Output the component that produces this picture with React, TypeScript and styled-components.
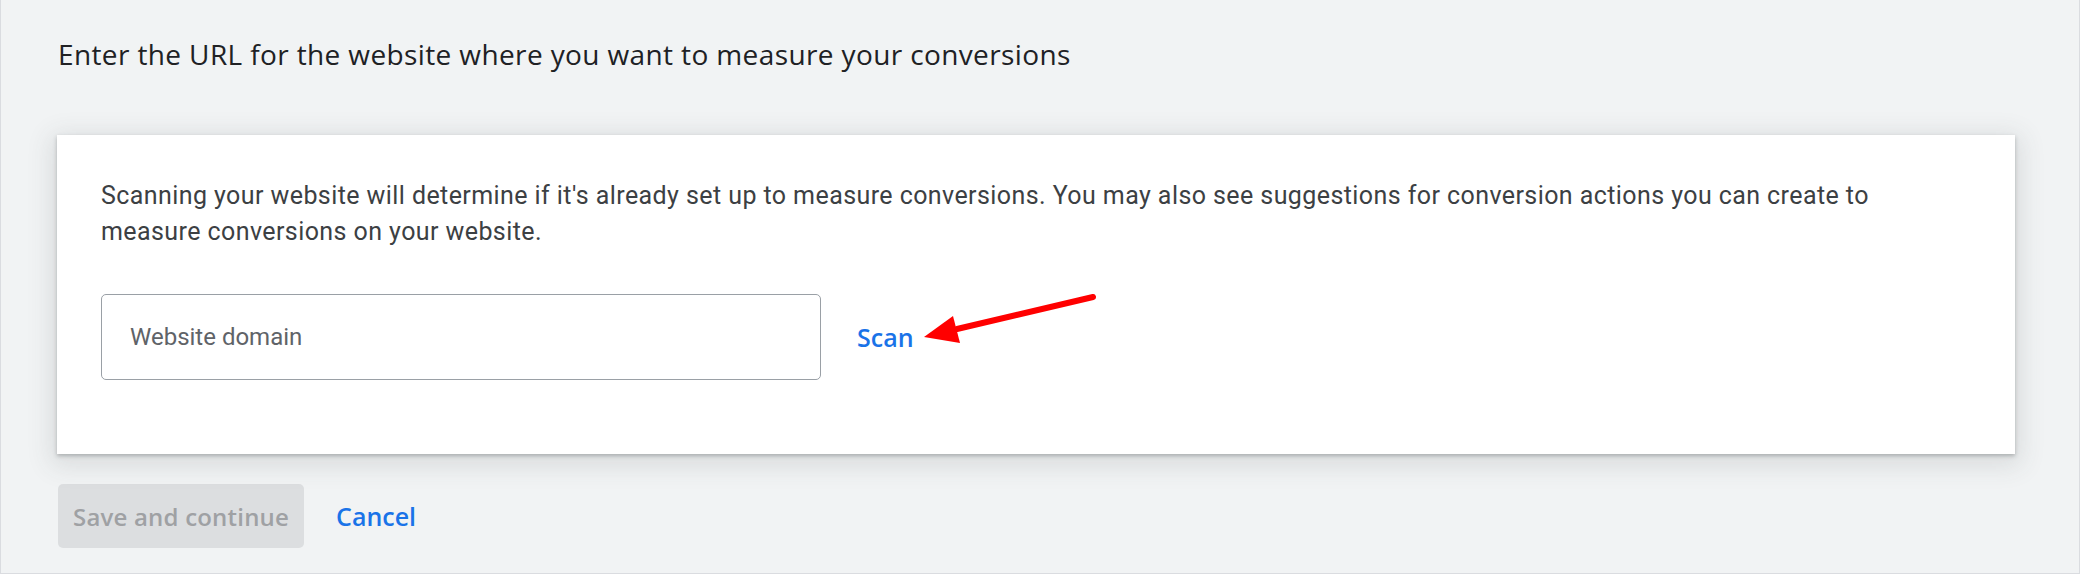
import styled, { createGlobalStyle } from "styled-components";

const GlobalStyle = createGlobalStyle`
  html, body {
    margin: 0;
    padding: 0;
    background: #f1f3f4;
  }
  * {
    box-sizing: border-box;
  }
`;

const Page = styled.div`
  height: 574px;
  padding: 36px 64px 0 56px;
  background: #f1f3f4;
  border: 1px solid #dadce0;
  border-top: none;
`;

const Heading = styled.h2`
  margin: 0 0 0 1px;
  font-family: "Open Sans", "Liberation Sans", sans-serif;
  font-size: 28px;
  font-weight: 500;
  letter-spacing: 0.38px;
  line-height: 36px;
  color: #202124;
`;

const Card = styled.section`
  position: relative;
  margin-top: 63px;
  padding: 43px 44px 74px;
  background: #fff;
  box-shadow: 0 2px 4px rgba(60, 64, 67, 0.32), 0 6px 24px 6px rgba(60, 64, 67, 0.12);
`;

const Description = styled.p`
  margin: 0;
  max-width: 1800px;
  font-family: Roboto, "Liberation Sans", sans-serif;
  font-size: 25px;
  letter-spacing: 0.42px;
  line-height: 36px;
  color: #3c4043;
`;

const ScanRow = styled.div`
  display: flex;
  align-items: center;
  margin-top: 44px;
`;

const DomainInput = styled.input`
  width: 720px;
  height: 86px;
  padding: 0 28px;
  border: 1px solid #9aa0a6;
  border-radius: 5px;
  outline: none;
  font-family: Roboto, "Liberation Sans", sans-serif;
  font-size: 24px;
  color: #202124;
  background: #fff;

  &::placeholder {
    color: #5f6368;
  }
`;

const TextButton = styled.button<{ $gap: number }>`
  margin-left: ${(p) => p.$gap}px;
  padding: 0;
  border: none;
  background: none;
  font-family: "Open Sans", "Liberation Sans", sans-serif;
  font-size: 25px;
  font-weight: 600;
  color: #1a73e8;
  cursor: pointer;
`;

const Arrow = styled.svg`
  position: absolute;
  left: 860px;
  top: 150px;
  overflow: visible;
  pointer-events: none;
`;

const Footer = styled.div`
  display: flex;
  align-items: center;
  margin-top: 30px;
  padding-left: 1px;
`;

const SaveButton = styled.button`
  height: 64px;
  padding: 0 15px;
  border: none;
  border-radius: 5px;
  background: #dcdee0;
  font-family: "Open Sans", "Liberation Sans", sans-serif;
  font-size: 24px;
  font-weight: 600;
  letter-spacing: 0.2px;
  color: #9fa1a4;
`;

function App() {
  return (
    <>
      <GlobalStyle />
      <Page>
        <Heading>Enter the URL for the website where you want to measure your conversions</Heading>
        <Card>
          <Description>
            Scanning your website will determine if it's already set up to measure conversions. You may also see
            suggestions for conversion actions you can create to measure conversions on your website.
          </Description>
          <ScanRow>
            <DomainInput placeholder="Website domain" />
            <TextButton $gap={36}>Scan</TextButton>
          </ScanRow>
          <Arrow width="245" height="65" viewBox="0 0 245 65">
            <line x1="176" y1="12" x2="40" y2="44" stroke="#ff0000" strokeWidth="6" strokeLinecap="round" />
            <polygon points="7,52 36,31 43,58" fill="#ff0000" />
          </Arrow>
        </Card>
        <Footer>
          <SaveButton disabled>Save and continue</SaveButton>
          <TextButton $gap={32}>Cancel</TextButton>
        </Footer>
      </Page>
    </>
  );
}

export default App;
